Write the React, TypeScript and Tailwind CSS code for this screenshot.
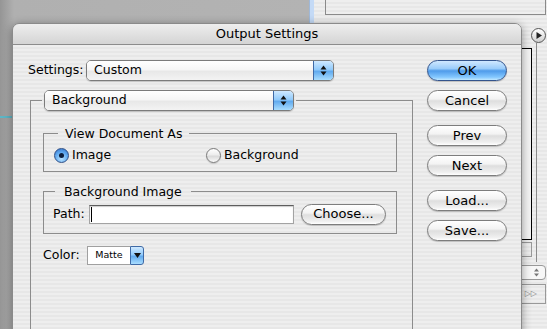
import React from "react";

const stripes =
  "bg-[repeating-linear-gradient(to_bottom,#eeeeee_0px,#eeeeee_2px,#e7e7e7_2px,#e7e7e7_4px)]";

const Arrows = () => (
  <svg width="7" height="11" viewBox="0 0 7 11">
    <polygon points="0.5,4.5 3.5,0.5 6.5,4.5" fill="#111" />
    <polygon points="0.5,6.5 6.5,6.5 3.5,10.5" fill="#111" />
  </svg>
);

const DownArrow = () => (
  <svg width="7" height="5" viewBox="0 0 7 5">
    <polygon points="0,0 7,0 3.5,5" fill="#111" />
  </svg>
);

const Popup = ({ label, className }: { label: string; className: string }) => (
  <div
    className={`flex h-[21px] rounded-[5px] border border-[#7b7b7b] overflow-hidden shadow-[0_1px_1px_rgba(0,0,0,0.18)] ${className}`}
  >
    <div className="flex-1 flex items-center pl-[7px] bg-[linear-gradient(to_bottom,#ffffff_0%,#f6f6f6_45%,#e8e8e8_55%,#f3f3f3_100%)]">
      {label}
    </div>
    <div className="w-[20px] flex items-center justify-center border-l border-[#3f6aa6] bg-[linear-gradient(to_bottom,#cfe9ff_0%,#92cbfb_45%,#62abef_55%,#a9ddff_100%)]">
      <Arrows />
    </div>
  </div>
);

const AquaButton = ({ label, primary, className = "" }: { label: string; primary?: boolean; className?: string }) => (
  <div
    className={`flex h-[21px] w-[80px] items-center justify-center rounded-full border text-[13px] shadow-[0_1px_1px_rgba(0,0,0,0.2)] ${
      primary
        ? "border-[#33548d] bg-[linear-gradient(to_bottom,#d0e8ff_0%,#9accfa_40%,#4f9bea_52%,#84c8ff_85%,#c2e9ff_100%)]"
        : "border-[#7d7d7d] bg-[linear-gradient(to_bottom,#ffffff_0%,#f3f3f3_42%,#dedede_52%,#efefef_85%,#ffffff_100%)]"
    } ${className}`}
  >
    {label}
  </div>
);

const Radio = ({ checked }: { checked?: boolean }) =>
  checked ? (
    <div className="flex h-[15px] w-[15px] items-center justify-center rounded-full border border-[#2e4e86] bg-[radial-gradient(circle_at_50%_75%,#b8e2ff_0%,#5ea8ef_55%,#2f6ec8_100%)]">
      <div className="h-[5px] w-[5px] rounded-full bg-[#0d1e3c]" />
    </div>
  ) : (
    <div className="h-[15px] w-[15px] rounded-full border border-[#7a7a7a] bg-[linear-gradient(to_bottom,#ffffff_0%,#ededed_45%,#d9d9d9_55%,#fafafa_100%)] shadow-[0_1px_1px_rgba(0,0,0,0.15)]" />
  );

export default function App() {
  return (
    <div className="relative h-[329px] w-[547px] overflow-hidden bg-[#b3b3b3] font-['DejaVu_Sans','Liberation_Sans',sans-serif] text-[12.5px] text-black">
      {/* windows behind the sheet */}
      <div className="flex h-full">
        <div className="h-full w-[309px] bg-[linear-gradient(to_right,#959595,#b0b0b0_14px,#b3b3b3)] pt-[116px]">
          <div className="h-[2px] w-[14px] bg-[#5db6c6]" />
        </div>
        <div className="h-full w-[5px] border-l border-[#9fb8d8] bg-[#c4daf6]" />
        <div className={`h-full flex-1 ${stripes}`}>
          <div className="ml-[11px] h-[15px] w-[221px] border border-t-0 border-[#8a8a8a]" />
          <div className="ml-[217px] mt-[13px] flex h-[15px] w-[15px] items-center justify-center rounded-full border border-[#555] bg-[linear-gradient(to_bottom,#ffffff,#cfcfcf)]">
            <svg width="6" height="7" viewBox="0 0 6 7">
              <polygon points="0.5,0 6,3.5 0.5,7" fill="#222" />
            </svg>
          </div>
          <div className="ml-[200px] h-[219px] w-[23px] border-r border-[#8a8a8a] pt-[5px]">
            <div className="h-[192px] w-[18px] border border-black bg-[#f4f4f4]" />
            <div className="mt-[2px] h-[15px] w-[18px] border border-[#999]" />
          </div>
          <div className="ml-[200px] mt-[3px] flex h-[15px] w-[32px] items-center justify-end rounded-[4px] border border-[#999] bg-[#f7f7f7] pr-[6px]">
            <svg width="5" height="9" viewBox="0 0 5 9">
              <polygon points="0,3.5 2.5,0.5 5,3.5" fill="#777" />
              <polygon points="0,5.5 5,5.5 2.5,8.5" fill="#777" />
            </svg>
          </div>
          <div className="ml-[200px] mt-[4px] flex h-[20px] w-[32px] items-center justify-end border border-[#999] pr-[8px] text-[8px] text-[#888]">
            ▷▷
          </div>
        </div>
      </div>

      {/* Output Settings sheet */}
      <div className="absolute left-[12px] top-[23px] h-[320px] w-[510px] overflow-hidden rounded-t-[7px] border border-[#8a8a8a] shadow-[0_2px_10px_rgba(0,0,0,0.4)]">
        <div className="flex h-[21px] items-center justify-center border-b border-[#8c8c8c] bg-[linear-gradient(to_bottom,#eeeeee,#d4d4d4)] text-[13px]">
          Output Settings
        </div>
        <div className={`flex h-full pl-[15px] pt-[15px] ${stripes}`}>
          <div className="w-[384px]">
            <div className="flex h-[21px] items-center">
              <span className="w-[58px]">Settings:</span>
              <Popup label="Custom" className="w-[248px]" />
            </div>

            <fieldset className="ml-[2px] mt-[9px] h-[260px] w-[383px] border border-[#8c8c8c]">
              <legend className="ml-[11px] px-[2px]">
                <Popup label="Background" className="w-[250px]" />
              </legend>

              <fieldset className="ml-[12px] mr-[15px] mt-[15px] border border-[#8c8c8c] pb-[8px] pt-[6px]">
                <legend className="ml-[14px] px-[7px] leading-[15px]">View Document As</legend>
                <div className="flex h-[16px] items-center pl-[10px]">
                  <div className="flex w-[152px] items-center gap-[3px]">
                    <Radio checked />
                    <span>Image</span>
                  </div>
                  <div className="flex items-center gap-[3px]">
                    <Radio />
                    <span>Background</span>
                  </div>
                </div>
              </fieldset>

              <fieldset className="ml-[12px] mr-[15px] mt-[12px] border border-[#8c8c8c] pb-[9px] pt-[5px]">
                <legend className="ml-[11px] px-[9px] leading-[15px]">Background Image</legend>
                <div className="flex h-[20px] items-center pl-[9px]">
                  <span className="w-[36px]">Path:</span>
                  <div className="flex h-[19px] w-[205px] items-center border border-[#a3a3a3] border-t-[#5e5e5e] bg-white pl-[1px] shadow-[inset_0_1px_1px_rgba(0,0,0,0.2)]">
                    <span className="h-[15px] w-px bg-black" />
                  </div>
                  <AquaButton label="Choose..." className="ml-[7px] w-[85px]" />
                </div>
              </fieldset>

              <div className="ml-[12px] mt-[12px] flex h-[19px] items-center">
                <span className="w-[44px]">Color:</span>
                <div className="flex h-[19px] w-[57px]">
                  <div className="flex flex-1 items-center justify-center border border-r-0 border-[#a0a0a0] bg-white text-[9.5px]">
                    Matte
                  </div>
                  <div className="flex w-[14px] items-center justify-center rounded-r-[3px] border border-[#3f6aa6] bg-[linear-gradient(to_bottom,#cfe9ff_0%,#92cbfb_45%,#62abef_55%,#a9ddff_100%)]">
                    <DownArrow />
                  </div>
                </div>
              </div>
            </fieldset>
          </div>

          <div className="ml-[15px] flex w-[80px] flex-col">
            <AquaButton label="OK" primary />
            <AquaButton label="Cancel" className="mt-[9px]" />
            <AquaButton label="Prev" className="mt-[14px]" />
            <AquaButton label="Next" className="mt-[9px]" />
            <AquaButton label="Load..." className="mt-[14px]" />
            <AquaButton label="Save..." className="mt-[9px]" />
          </div>
        </div>
      </div>
    </div>
  );
}
